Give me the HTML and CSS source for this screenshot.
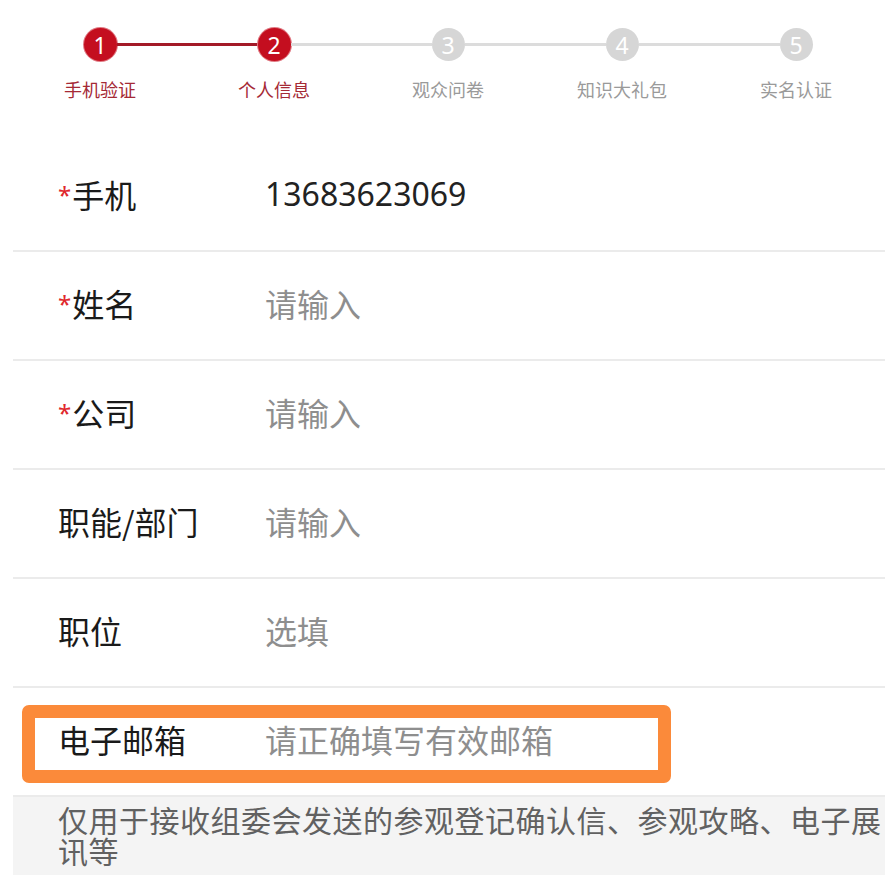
FILE: index.html
```html
<!DOCTYPE html>
<html>
  <head>
    <meta charset="UTF-8">
    <title>个人信息</title>
    <link rel="stylesheet" href="styles.css">
  </head>
  <body>
    <div class="page">
      <div class="steps">
        <div class="step done">
          <div class="track"><span class="line none"></span><span class="dot">1</span><span class="line red"></span></div>
          <div class="step-name">手机验证</div>
        </div>
        <div class="step done">
          <div class="track"><span class="line red"></span><span class="dot">2</span><span class="line"></span></div>
          <div class="step-name">个人信息</div>
        </div>
        <div class="step">
          <div class="track"><span class="line"></span><span class="dot">3</span><span class="line"></span></div>
          <div class="step-name">观众问卷</div>
        </div>
        <div class="step">
          <div class="track"><span class="line"></span><span class="dot">4</span><span class="line"></span></div>
          <div class="step-name">知识大礼包</div>
        </div>
        <div class="step">
          <div class="track"><span class="line"></span><span class="dot">5</span><span class="line none"></span></div>
          <div class="step-name">实名认证</div>
        </div>
      </div>

      <form class="info-form">
        <div class="row">
          <label class="label"><span class="req">*</span>手机</label>
          <div class="value">13683623069</div>
        </div>
        <div class="row">
          <label class="label"><span class="req">*</span>姓名</label>
          <input class="field" type="text" placeholder="请输入">
        </div>
        <div class="row">
          <label class="label"><span class="req">*</span>公司</label>
          <input class="field" type="text" placeholder="请输入">
        </div>
        <div class="row">
          <label class="label">职能/部门</label>
          <input class="field" type="text" placeholder="请输入">
        </div>
        <div class="row">
          <label class="label">职位</label>
          <input class="field" type="text" placeholder="选填">
        </div>
        <div class="row email-row">
          <label class="label">电子邮箱</label>
          <input class="field" type="text" placeholder="请正确填写有效邮箱">
          <span class="highlight"></span>
        </div>
        <p class="note">仅用于接收组委会发送的参观登记确认信、参观攻略、电子展讯等</p>
      </form>
    </div>
  </body>
</html>
```

FILE: styles.css
```css
body {
  margin: 0;
  background-color: #ffffff;
  font-family: "Noto Sans CJK SC", "Noto Sans", sans-serif;
  color: #1a1a1a;
}
.page {
  margin-left: 13px;
  width: 872px;
}

/* steps */
.steps {
  display: grid;
  grid-template-columns: repeat(5, 174px);
  padding-top: 28px;
  height: 115px;
}
.step {
  display: flex;
  flex-direction: column;
  align-items: center;
}
.track {
  display: flex;
  align-items: center;
  width: 100%;
  height: 33px;
}
.line {
  flex: 1;
  height: 3px;
  background-color: #dcdcdc;
}
.line.red {
  background-color: #a31a28;
}
.line.none {
  background-color: transparent;
}
.dot {
  display: flex;
  align-items: center;
  justify-content: center;
  width: 33px;
  height: 33px;
  border-radius: 50%;
  background-color: #d6d6d6;
  color: #ffffff;
  font-family: "Noto Sans", sans-serif;
  font-size: 23px;
}
.step.done .dot {
  background-color: #c40e1f;
  box-shadow: 0 0 0 1px #e07a84;
}
.step-name {
  margin-top: 16px;
  font-size: 18px;
  line-height: 24px;
  color: #9a9a9a;
}
.step.done .step-name {
  color: #a52a36;
}

/* form rows */
.row {
  display: flex;
  align-items: center;
  height: 101px;
  padding-bottom: 6px;
  border-bottom: 2px solid #ebebeb;
  font-size: 32px;
}
.label {
  width: 207px;
  padding-left: 45px;
  color: #1a1a1a;
}
.req {
  display: inline-block;
  vertical-align: 4px;
  margin-right: 1px;
  color: #e0282c;
  font-family: "Noto Sans", sans-serif;
  font-size: 24px;
}
.value {
  font-family: "Noto Sans", sans-serif;
  color: #222222;
}
.field {
  flex: 1;
  border: none;
  outline: none;
  padding: 0;
  background: transparent;
  font-family: inherit;
  font-size: 32px;
  color: #222222;
}
.field::placeholder {
  color: #8e8e8e;
}

.email-row {
  position: relative;
}
.highlight {
  position: absolute;
  left: 9px;
  top: 17px;
  width: 649px;
  height: 78px;
  box-sizing: border-box;
  border: 13px solid #fb8a3a;
  border-radius: 7px;
}

.note {
  margin: 0;
  padding: 7px 0 9px 45px;
  background-color: #f4f4f4;
  font-size: 30px;
  letter-spacing: 0.5px;
  line-height: 31px;
  color: #616161;
}
```
